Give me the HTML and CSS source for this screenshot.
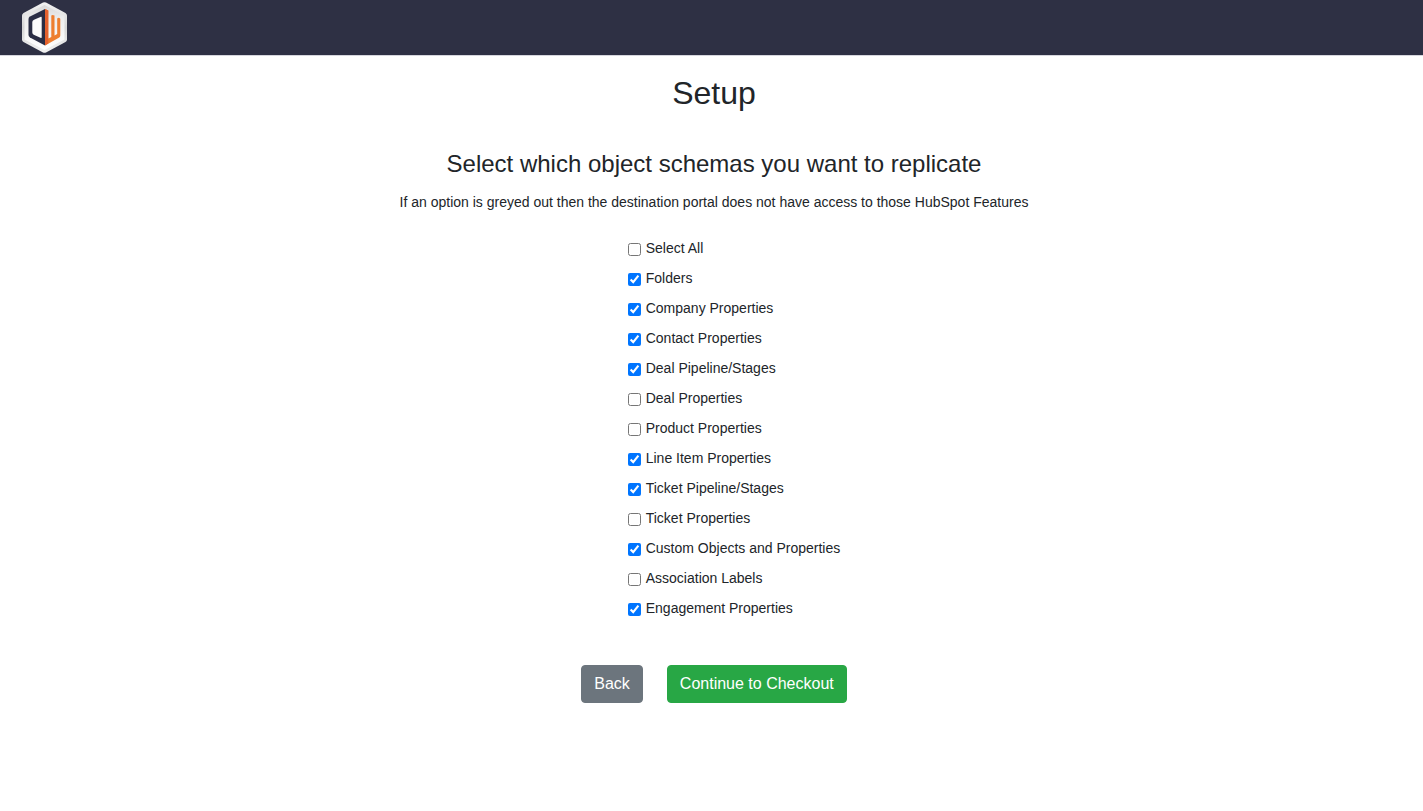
FILE: index.html
```html
<!DOCTYPE html>
<html lang="en">
<head>
<meta charset="utf-8">
<meta name="viewport" content="width=device-width, initial-scale=1">
<title>Setup</title>
<link rel="stylesheet" href="styles.css">
</head>
<body>
<header class="navbar">
  <a class="brand" href="#" aria-label="Home">
    <svg class="logo" width="45" height="51" viewBox="22 2 45 51" aria-hidden="true">
      <defs>
        <linearGradient id="rim" x1="0" y1="0" x2="0" y2="1">
          <stop offset="0" stop-color="#f2f2f2"/>
          <stop offset="0.5" stop-color="#d6d6d6"/>
          <stop offset="1" stop-color="#f2f2f2"/>
        </linearGradient>
        <linearGradient id="face" x1="0" y1="0" x2="0" y2="1">
          <stop offset="0" stop-color="#d8d8d8"/>
          <stop offset="0.3" stop-color="#ededed"/>
          <stop offset="1" stop-color="#ffffff"/>
        </linearGradient>
      </defs>
      <path d="M43 2.600Q44.500 1.800 46 2.600L65.500 13Q67 14 67 15.500V39.500Q67 41 65.500 42L46 52.400Q44.500 53.200 43 52.400L23.500 42Q22 41 22 39.500V15.500Q22 14 23.500 13Z" fill="url(#rim)"/>
      <path d="M44.500 5L64.500 15.500V39.500L44.500 50L24.500 39.500V15.500Z" fill="url(#face)"/>
      <path d="M45 9L30 16.500Q28.500 17.300 28.500 19V35Q28.500 36.500 30 37.400L45 45.500Z" fill="#2a2d44"/>
      <path d="M41 16.800L34 19.700Q32.300 20.400 32.300 22V32.500Q32.300 34 33.700 34.700L41 38Q41.700 38.200 41.700 37.300V17.500Q41.700 16.500 41 16.800Z" fill="#fbfbfb"/>
      <path d="M45 9L48.300 10.500V38.500L51.300 37V15.500Q52.500 14.300 54.500 15.500V35.500L57.200 34V18.500Q58.700 17 60.300 18.700V35.500Q60.300 36.800 59.300 37.400L45 45.500Z" fill="#ee7f30"/>
      <path d="M45 9L48.300 10.500V43.500L45 45.500Z" fill="#e4602d"/>
    </svg>
  </a>
</header>
<main class="page">
  <h1 class="title">Setup</h1>
  <h2 class="subtitle">Select which object schemas you want to replicate</h2>
  <p class="hint">If an option is greyed out then the destination portal does not have access to those HubSpot Features</p>
  <form class="setup-form">
    <div class="options">
      <label class="option"><input type="checkbox">Select All</label>
      <label class="option"><input type="checkbox" checked>Folders</label>
      <label class="option"><input type="checkbox" checked>Company Properties</label>
      <label class="option"><input type="checkbox" checked>Contact Properties</label>
      <label class="option"><input type="checkbox" checked>Deal Pipeline/Stages</label>
      <label class="option"><input type="checkbox">Deal Properties</label>
      <label class="option"><input type="checkbox">Product Properties</label>
      <label class="option"><input type="checkbox" checked>Line Item Properties</label>
      <label class="option"><input type="checkbox" checked>Ticket Pipeline/Stages</label>
      <label class="option"><input type="checkbox">Ticket Properties</label>
      <label class="option"><input type="checkbox" checked>Custom Objects and Properties</label>
      <label class="option"><input type="checkbox">Association Labels</label>
      <label class="option"><input type="checkbox" checked>Engagement Properties</label>
    </div>
    <div class="actions">
      <button class="btn btn-secondary" type="button">Back</button>
      <button class="btn btn-success" type="button">Continue to Checkout</button>
    </div>
  </form>
</main>
</body>
</html>
```
FILE: styles.css
```css
*, *::before, *::after { box-sizing: border-box; }

body {
  margin: 0;
  background: #fff;
  color: #212529;
  font-family: "Liberation Sans", Arial, sans-serif;
  font-size: 14px;
  line-height: 20px;
}

.navbar {
  display: flex;
  align-items: center;
  padding: 2px 22px;
  background: #2e3044;
  border-bottom: 1px solid #d5d5dd;
}

.brand, .logo { display: block; }

.page {
  display: flex;
  flex-direction: column;
  align-items: center;
  padding: 17px 0 32px 5px;
}

.title, .subtitle, .hint { margin: 0; text-align: center; }

.title {
  font-size: 32px;
  font-weight: 500;
  line-height: 40px;
}

.subtitle {
  margin-top: 36px;
  font-size: 24px;
  font-weight: 500;
  line-height: 30px;
}

.hint { margin-top: 13px; }

.setup-form {
  display: flex;
  flex-direction: column;
  align-items: center;
  margin-top: 26px;
}

.options {
  display: flex;
  flex-direction: column;
  gap: 10px;
  padding-left: 40px;
}

.option {
  display: flex;
  align-items: center;
  gap: 5px;
}

.option input {
  width: 13px;
  height: 13px;
  margin: 2px 0 0;
  accent-color: #0075ff;
}

.actions {
  display: flex;
  gap: 24px;
  margin-top: 47px;
}

.btn {
  padding: 6px 12px;
  border: 1px solid transparent;
  border-radius: 4px;
  color: #fff;
  font-family: inherit;
  font-size: 16px;
  line-height: 24px;
}

.btn-secondary { background: #6c757d; border-color: #6c757d; }

.btn-success { background: #28a745; border-color: #28a745; }
```
